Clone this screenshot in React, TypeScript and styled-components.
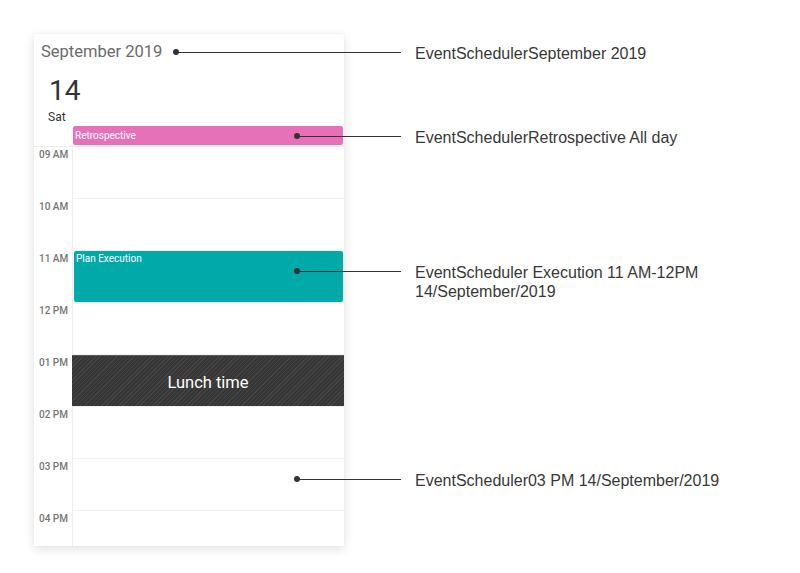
import React from "react";
import styled, { createGlobalStyle } from "styled-components";

const Global = createGlobalStyle`
  html, body { margin: 0; padding: 0; background: #ffffff; }
  body { font-family: Roboto, "Noto Sans", sans-serif; }
`;

const Page = styled.div`
  position: relative;
  width: 800px;
  height: 573px;
  padding: 34px 0 0 34px;
  box-sizing: border-box;
  overflow: hidden;
`;

const Card = styled.div`
  width: 310px;
  height: 512px;
  background: #fff;
  box-shadow: 0 3px 10px rgba(0, 0, 0, 0.12), 0 0 2px rgba(0, 0, 0, 0.04);
  display: flex;
  flex-direction: column;
  overflow: hidden;
`;

const Header = styled.div`
  padding: 8px 7px 0;
  font-family: Roboto, sans-serif;
  font-size: 16.5px;
  line-height: 20px;
  color: #6b6b6b;
`;

const DateBlock = styled.div`
  display: flex;
  flex-direction: column;
  align-items: flex-start;
  padding: 13px 0 0 14px;
  color: #333;
  font-family: Roboto, sans-serif;
`;

const DayNumber = styled.div`
  font-size: 28px;
  line-height: 32px;
  margin-left: 1px;
`;

const DayName = styled.div`
  font-size: 12px;
  line-height: 14px;
  margin-top: 3px;
`;

const AllDayRow = styled.div`
  margin-top: 1px;
  display: flex;
  padding: 1px 1px 1px 39px;
  border-bottom: 1px solid #ececec;
`;

const EventBar = styled.div<{ $bg: string }>`
  flex: 1;
  height: 19px;
  background: ${(p) => p.$bg};
  color: #fff;
  font-size: 10px;
  line-height: 19px;
  padding-left: 2px;
  border-radius: 2px;
  font-family: Roboto, sans-serif;
`;

const Grid = styled.div`
  display: flex;
  flex-direction: column;
`;

const HourRow = styled.div`
  display: flex;
  height: 52px;
  flex-shrink: 0;
`;

const TimeLabel = styled.div`
  width: 39px;
  flex-shrink: 0;
  border-right: 1px solid #eeeeee;
  font-family: Roboto, sans-serif;
  font-size: 10px;
  line-height: 12px;
  font-weight: 500;
  color: #757575;
  padding: 2px 0 0 5px;
  box-sizing: border-box;
`;

const Cell = styled.div`
  flex: 1;
  border-bottom: 1px solid #f2f2f2;
  display: flex;
  flex-direction: column;
`;

const TimedEvent = styled.div<{ $bg: string }>`
  height: 51px;
  margin: 0 1px 0 1px;
  background: ${(p) => p.$bg};
  border-radius: 2px;
  color: #fff;
  font-size: 10px;
  line-height: 12px;
  padding: 2px 2px;
  box-sizing: border-box;
  font-family: Roboto, sans-serif;
`;

const Blocked = styled.div`
  height: 53px;
  margin-left: -1px;
  position: relative;
  z-index: 1;
  background-color: #363636;
  background-image: repeating-linear-gradient(
    -45deg,
    rgba(255, 255, 255, 0.07) 0px,
    rgba(255, 255, 255, 0.07) 1px,
    transparent 1px,
    transparent 3px
  );
  border-top: 1px solid #5a5a5a;
  box-sizing: border-box;
  display: flex;
  align-items: center;
  justify-content: center;
  color: #fff;
  font-family: Roboto, sans-serif;
  font-size: 16.5px;
  padding-top: 3px;
`;

const Callout = styled.div<{ $x: number; $y: number }>`
  position: absolute;
  z-index: 2;
  left: ${(p) => p.$x - 3}px;
  top: ${(p) => p.$y - 3}px;
  display: flex;
  align-items: flex-start;
`;

const Dot = styled.div`
  width: 6px;
  height: 6px;
  border-radius: 50%;
  background: #333;
  flex-shrink: 0;
`;

const Leader = styled.div<{ $len: number }>`
  width: ${(p) => p.$len}px;
  height: 1px;
  background: #333;
  margin: 2.5px 0 0 -3px;
  flex-shrink: 0;
`;

const CalloutText = styled.div`
  margin: -5px 0 0 14px;
  font-family: "Liberation Sans", Arial, sans-serif;
  font-size: 16px;
  line-height: 19px;
  color: #383838;
  white-space: nowrap;
`;

const hours = ["09 AM", "10 AM", "11 AM", "12 PM", "01 PM", "02 PM", "03 PM", "04 PM"];

const callouts = [
  { x: 176, y: 52, text: ["EventSchedulerSeptember 2019"] },
  { x: 297, y: 136, text: ["EventSchedulerRetrospective All day"] },
  { x: 297, y: 271, text: ["EventScheduler Execution 11 AM-12PM", "14/September/2019"] },
  { x: 297, y: 479, text: ["EventScheduler03 PM 14/September/2019"] },
];

export default function App() {
  return (
    <>
      <Global />
      <Page>
        <Card>
          <Header>September 2019</Header>
          <DateBlock>
            <DayNumber>14</DayNumber>
            <DayName>Sat</DayName>
          </DateBlock>
          <AllDayRow>
            <EventBar $bg="#e671b8">Retrospective</EventBar>
          </AllDayRow>
          <Grid>
            {hours.map((h) => (
              <HourRow key={h}>
                <TimeLabel>{h}</TimeLabel>
                <Cell>
                  {h === "11 AM" && <TimedEvent $bg="#02a9a9">Plan Execution</TimedEvent>}
                  {h === "01 PM" && <Blocked>Lunch time</Blocked>}
                </Cell>
              </HourRow>
            ))}
          </Grid>
        </Card>
        {callouts.map((c) => (
          <Callout key={c.y} $x={c.x} $y={c.y}>
            <Dot />
            <Leader $len={401 - c.x} />
            <CalloutText>
              {c.text.map((t) => (
                <div key={t}>{t}</div>
              ))}
            </CalloutText>
          </Callout>
        ))}
      </Page>
    </>
  );
}
